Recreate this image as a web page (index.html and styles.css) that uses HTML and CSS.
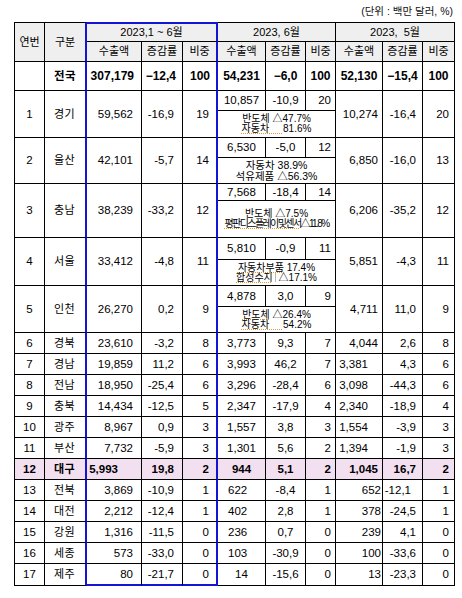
FILE: index.html
```html
<!DOCTYPE html>
<html lang="ko">
<head>
<meta charset="utf-8">
<title>지역별 수출 실적</title>
<link rel="stylesheet" href="styles.css">
</head>
<body>
<div class="page">
  <div class="unit">(단위 : 백만 달러, %)</div>
  <div class="grid">
    <div class="tr head">
      <div class="hd t1 sp2r">연번</div>
      <div class="hd t1 sp2r bR">구분</div>
      <div class="hd bT sp3c bR">2023,1 ~ 6월</div>
      <div class="hd t1 sp3c">2023, 6월</div>
      <div class="hd t1 sp3c">2023,&nbsp; 5월</div>
      <div class="hd">수출액</div><div class="hd">증감률</div><div class="hd bR">비중</div>
      <div class="hd">수출액</div><div class="hd">증감률</div><div class="hd">비중</div>
      <div class="hd">수출액</div><div class="hd">증감률</div><div class="hd">비중</div>
    </div>

    <div class="tr total">
      <div class="no"></div><div class="nm bR">전국</div>
      <div class="p7">307,179</div><div class="p6">−12,4</div><div class="p6 bR">100</div>
      <div class="c">54,231</div><div class="c">−6,0</div><div class="c">100</div>
      <div class="c">52,130</div><div class="c">−15,4</div><div class="c">100</div>
    </div>

    <div class="tr pair">
      <div class="no sp2r">1</div><div class="nm sp2r bR">경기</div>
      <div class="sp2r">59,562</div><div class="sp2r">-16,9</div><div class="sp2r p7 bR">19</div>
      <div class="c">10,857</div><div class="c">-10,9</div><div class="p4 top">20</div>
      <div class="sp2r p4">10,274</div><div class="sp2r p6">-16,4</div><div class="sp2r p5">20</div>
      <div class="note sp3c"><span>반도체 △47.7%</span><span><span class="sq">자동차&nbsp;&nbsp;&nbsp;&nbsp;&nbsp;</span>81.6%</span></div>
    </div>

    <div class="tr pair">
      <div class="no sp2r">2</div><div class="nm sp2r bR">울산</div>
      <div class="sp2r">42,101</div><div class="sp2r">-5,7</div><div class="sp2r p7 bR">14</div>
      <div class="c">6,530</div><div class="c">-5,0</div><div class="p4">12</div>
      <div class="sp2r p4">6,850</div><div class="sp2r p6">-16,0</div><div class="sp2r p5">13</div>
      <div class="note big sp3c"><span>자동차 38.9%</span><span>석유제품 △56.3%</span></div>
    </div>

    <div class="tr pair">
      <div class="no sp2r">3</div><div class="nm sp2r bR">충남</div>
      <div class="sp2r">38,239</div><div class="sp2r">-33,2</div><div class="sp2r p7 bR">12</div>
      <div class="c">7,568</div><div class="c">-18,4</div><div class="p4">14</div>
      <div class="sp2r p4">6,206</div><div class="sp2r p6">-35,2</div><div class="sp2r p5">12</div>
      <div class="note sp3c"><span>반도체 △7.5%</span><span class="tight"><span class="sq">평판디스플레이및센서</span>△11.8%</span></div>
    </div>

    <div class="tr pair">
      <div class="no sp2r">4</div><div class="nm sp2r bR">서울</div>
      <div class="sp2r">33,412</div><div class="sp2r">-4,8</div><div class="sp2r p7 bR">11</div>
      <div class="c">5,810</div><div class="c">-0,9</div><div class="p4">11</div>
      <div class="sp2r p4">5,851</div><div class="sp2r p6">-4,3</div><div class="sp2r p5">11</div>
      <div class="note sp3c"><span><span class="sq">자동차부품</span> 17.4%</span><span><span class="sq">합성수지</span><span class="caret"></span>&nbsp;△17.1%</span></div>
    </div>

    <div class="tr pair">
      <div class="no sp2r">5</div><div class="nm sp2r bR">인천</div>
      <div class="sp2r">26,270</div><div class="sp2r">0,2</div><div class="sp2r p7 bR">9</div>
      <div class="c">4,878</div><div class="c">3,0</div><div class="p4">9</div>
      <div class="sp2r p4">4,711</div><div class="sp2r p6">11,0</div><div class="sp2r p5">9</div>
      <div class="note sp3c"><span><span class="sq">반도체</span> △26.4%</span><span><span class="sq">자동차&nbsp;&nbsp;&nbsp;&nbsp;&nbsp;</span>54.2%</span></div>
    </div>

    <div class="tr"><div class="no">6</div><div class="nm bR">경북</div><div>23,610</div><div>-3,2</div><div class="p7 bR">8</div><div class="c">3,773</div><div class="c">9,3</div><div class="p4">7</div><div class="p4">4,044</div><div class="p6">2,6</div><div class="p5">8</div></div>
    <div class="tr"><div class="no">7</div><div class="nm bR">경남</div><div>19,859</div><div>11,2</div><div class="p7 bR">6</div><div class="c">3,993</div><div class="c">46,2</div><div class="p4">7</div><div class="p14">3,381</div><div class="p6">4,3</div><div class="p5">6</div></div>
    <div class="tr"><div class="no">8</div><div class="nm bR">전남</div><div>18,950</div><div>-25,4</div><div class="p7 bR">6</div><div class="c">3,296</div><div class="c">-28,4</div><div class="p4">6</div><div class="p14">3,098</div><div class="p6">-44,3</div><div class="p5">6</div></div>
    <div class="tr"><div class="no">9</div><div class="nm bR">충북</div><div>14,434</div><div>-12,5</div><div class="p7 bR">5</div><div class="c">2,347</div><div class="c">-17,9</div><div class="p4">4</div><div class="p14">2,340</div><div class="p6">-18,9</div><div class="p5">4</div></div>
    <div class="tr"><div class="no">10</div><div class="nm bR">광주</div><div>8,967</div><div>0,9</div><div class="p7 bR">3</div><div class="c">1,557</div><div class="c">3,8</div><div class="p4">3</div><div class="p14">1,554</div><div class="p6">-3,9</div><div class="p5">3</div></div>
    <div class="tr"><div class="no">11</div><div class="nm bR">부산</div><div>7,732</div><div>-5,9</div><div class="p7 bR">3</div><div class="c">1,301</div><div class="c">5,6</div><div class="p4">2</div><div class="p14">1,394</div><div class="p6">-1,9</div><div class="p5">3</div></div>
    <div class="tr hl"><div class="no">12</div><div class="nm bR">대구</div><div class="p23">5,993</div><div>19,8</div><div class="p7 bR">2</div><div class="c">944</div><div class="c">5,1</div><div class="p4">2</div><div class="p4">1,045</div><div class="p6">16,7</div><div class="p5">2</div></div>
    <div class="tr"><div class="no">13</div><div class="nm bR">전북</div><div>3,869</div><div>-10,9</div><div class="p7 bR">1</div><div class="l">622</div><div class="c">-8,4</div><div class="p4">1</div><div class="p1">652</div><div class="p11">-12,1</div><div class="p5">1</div></div>
    <div class="tr"><div class="no">14</div><div class="nm bR">대전</div><div>2,212</div><div>-12,4</div><div class="p7 bR">1</div><div class="l">402</div><div class="c">2,8</div><div class="p4">1</div><div class="p1">378</div><div class="p6">-24,5</div><div class="p5">1</div></div>
    <div class="tr"><div class="no">15</div><div class="nm bR">강원</div><div>1,316</div><div>-11,5</div><div class="p7 bR">0</div><div class="l">236</div><div class="c">0,7</div><div class="p4">0</div><div class="p1">239</div><div class="p6">4,1</div><div class="p5">0</div></div>
    <div class="tr"><div class="no">16</div><div class="nm bR">세종</div><div>573</div><div>-33,0</div><div class="p7 bR">0</div><div class="l">103</div><div class="c">-30,9</div><div class="p4">0</div><div class="p1">100</div><div class="p6">-33,6</div><div class="p5">0</div></div>
    <div class="tr last"><div class="no">17</div><div class="nm bR">제주</div><div class="bB">80</div><div class="bB">-21,7</div><div class="p7 bR bB">0</div><div class="c">14</div><div class="c">-15,6</div><div class="p4">0</div><div class="p1">13</div><div class="p6">-23,3</div><div class="p5">0</div></div>
  </div>
</div>
</body>
</html>
```
FILE: styles.css
```css
html, body {
  margin: 0;
  padding: 0;
  background: #ffffff;
}
body {
  font-family: "Liberation Sans", "Noto Sans CJK KR", sans-serif;
  font-size: 11.5px;
  color: #000000;
}
.page {
  margin-left: 14px;
  padding-top: 4px;
  width: 441px;
}
.unit {
  text-align: right;
  font-size: 10.5px;
  line-height: 14px;
  height: 14px;
  margin-bottom: 4px;
  padding-right: 2px;
  color: #111;
}
.grid {
  display: grid;
  grid-template-columns: 30px 42px 55px 41px 35px 48px 40px 30px 47px 40px 32px;
  grid-template-rows: 20px 20px 29px 20px 27px 20px 26px 17px 37px 22px 26px 21px 26px repeat(11, 21px) 22px;
  border-left: 1px solid #000;
  width: max-content;
}
.tr { display: contents; }
.tr > div {
  box-sizing: border-box;
  border-right: 1px solid #000;
  border-bottom: 1px solid #000;
  display: flex;
  align-items: center;
  justify-content: flex-end;
  padding-right: 8px;
  white-space: nowrap;
  overflow: hidden;
  line-height: 13px;
  min-width: 0;
}
.tr > .hd {
  background: #efefef;
  justify-content: center;
  padding: 0;
  font-size: 11px;
}
.tr > .t1 { border-top: 1px solid #000; }
.tr > .bT { border-top: 2px solid #1414d6; }
.tr > .bR { border-right: 2px solid #1414d6; }
.tr > .bB { border-bottom: 2px solid #1414d6; }
.sp2r { grid-row: span 2; }
.sp3c { grid-column: span 3; }

.tr > .c { justify-content: center; padding: 0; }
.tr > .l { justify-content: flex-start; padding: 0 0 0 10px; }
.tr > .no { justify-content: center; padding: 0; }
.tr > .nm {
  justify-content: flex-start;
  padding: 0 0 0 9px;
  font-size: 11px;
  letter-spacing: 0.5px;
}
.tr > .p1 { padding-right: 1px; }
.tr > .p4 { padding-right: 4px; }
.tr > .p5 { padding-right: 5px; }
.tr > .p6 { padding-right: 6px; }
.tr > .p7 { padding-right: 7px; }
.tr > .p11 { padding-right: 11px; }
.tr > .p14 { padding-right: 14px; }
.tr > .p23 { padding-right: 23px; }

.total > div { font-weight: bold; font-size: 12px; }
.total > .nm { font-size: 11.5px; }
.hl > div { background: #f2dff0; font-weight: bold; }

.tr > .note {
  flex-direction: column;
  justify-content: center;
  align-items: center;
  padding: 0;
  font-size: 10px;
  line-height: 10px;
}
.tr > .note.big { font-size: 10.5px; line-height: 11px; }
.note .tight { letter-spacing: -1.6px; }
.sq {
  text-decoration: underline dotted #e39a3c;
  text-underline-offset: 1px;
}
.caret {
  display: inline-block;
  width: 1px;
  height: 9px;
  background: #b8b8b8;
  margin-left: 2px;
  vertical-align: -1px;
}
```
